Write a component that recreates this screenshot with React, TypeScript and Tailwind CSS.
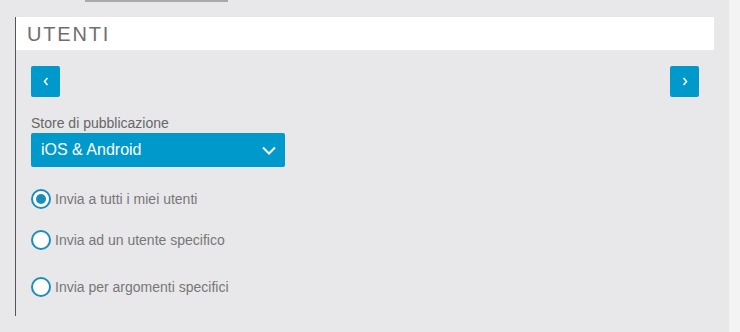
const Radio = ({ checked, label, className }: { checked?: boolean; label: string; className?: string }) => (
  <label className={`flex items-center ${className ?? ''}`}>
    <span className="flex h-[20px] w-[20px] items-center justify-center rounded-full border-[2.5px] border-[#1a8db8] bg-white">
      {checked && <span className="h-[10px] w-[10px] rounded-full bg-[#1a8db8]" />}
    </span>
    <span className="ml-[4px] text-[14px] leading-[16px] text-[#777]">{label}</span>
  </label>
)

const NavButton = ({ dir }: { dir: 'left' | 'right' }) => (
  <button className="flex h-[31px] w-[29px] items-center justify-center rounded-[2px] bg-[#0099cc]">
    <svg width="6" height="9" viewBox="0 0 6 9" fill="none">
      <polyline
        points={dir === 'left' ? '4.5,1 1.5,4.5 4.5,8' : '1.5,1 4.5,4.5 1.5,8'}
        stroke="white"
        strokeWidth="1.6"
      />
    </svg>
  </button>
)

export default function App() {
  return (
    <div className="flex h-[332px] w-[740px] bg-[#e8e8ea] font-['Liberation_Sans',Arial,sans-serif]">
      <div className="w-[729px]">
        <div className="ml-[85px] h-[2px] w-[143px] bg-[#a9a9a9]" />

        <div className="ml-[15px] mt-[15px] w-[699px] border-l border-[#555]">
          <div className="flex h-[33px] items-center bg-white pl-[11px]">
            <h2 className="text-[20px] leading-none tracking-[1.8px] text-[#6e6e6e]">UTENTI</h2>
          </div>

          <div className="px-[15px] pb-[19px]">
            <div className="mt-[16px] flex justify-between">
              <NavButton dir="left" />
              <NavButton dir="right" />
            </div>

            <div className="mt-[18px] text-[14px] leading-[16px] text-[#666]">Store di pubblicazione</div>

            <div className="mt-[2px] flex h-[34px] w-[254px] items-center justify-between rounded-[2px] bg-[#0099cc] pl-[10px] pr-[9px]">
              <span className="text-[16px] text-white">iOS &amp; Android</span>
              <svg width="14" height="9" viewBox="0 0 14 9" fill="none">
                <polyline points="1,1.5 7,7.5 13,1.5" stroke="white" strokeWidth="2" />
              </svg>
            </div>

            <Radio checked label="Invia a tutti i miei utenti" className="mt-[22px]" />
            <Radio label="Invia ad un utente specifico" className="mt-[21px]" />
            <Radio label="Invia per argomenti specifici" className="mt-[27px]" />
          </div>
        </div>
      </div>
      <div className="flex-1 bg-[#f3f3f3]" />
    </div>
  )
}
